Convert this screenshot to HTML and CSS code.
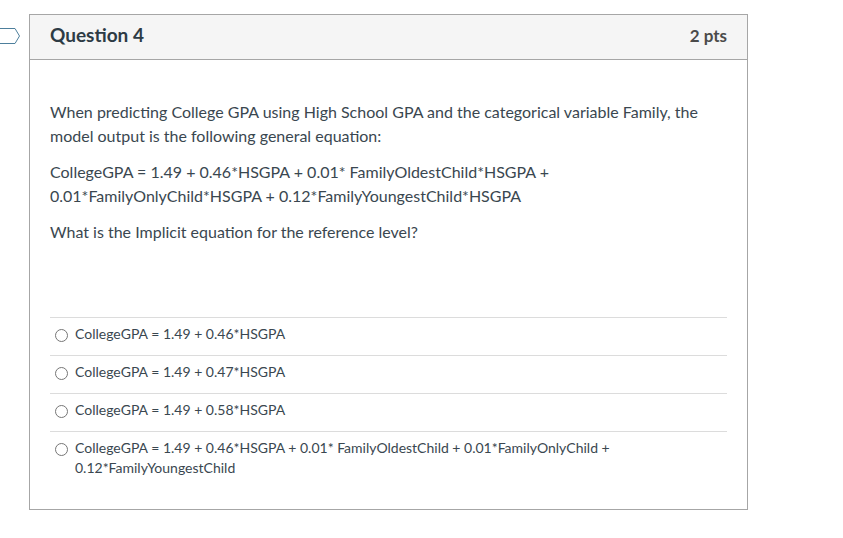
FILE: index.html
```html
<!DOCTYPE html>
<html lang="en">
<head>
<meta charset="utf-8">
<title>Question 4</title>
<link rel="stylesheet" href="styles.css">
</head>
<body>
<svg class="flag" width="21" height="16" viewBox="0 0 21 16" aria-hidden="true"><path d="M-2 .5H15L19.500 8 15 15.500H-2Z" fill="#fff" stroke="#4d7f9c" stroke-width="1"/></svg>
<section class="card">
  <header class="head">
    <h2 class="title">Question 4</h2>
    <span class="pts">2 pts</span>
  </header>
  <div class="body">
    <div class="prompt">
      <p>When predicting College GPA using High School GPA and the categorical variable Family, the model output is the following general equation:</p>
      <p>CollegeGPA = 1.49 + 0.46*HSGPA + 0.01* FamilyOldestChild*HSGPA + 0.01*FamilyOnlyChild*HSGPA + 0.12*FamilyYoungestChild*HSGPA</p>
      <p>What is the Implicit equation for the reference level?</p>
    </div>
    <ul class="answers">
      <li class="answer"><span class="radio"></span><span class="label">CollegeGPA = 1.49 + 0.46*HSGPA</span></li>
      <li class="answer"><span class="radio"></span><span class="label">CollegeGPA = 1.49 + 0.47*HSGPA</span></li>
      <li class="answer"><span class="radio"></span><span class="label">CollegeGPA = 1.49 + 0.58*HSGPA</span></li>
      <li class="answer"><span class="radio"></span><span class="label">CollegeGPA = 1.49 + 0.46*HSGPA + 0.01* FamilyOldestChild + 0.01*FamilyOnlyChild + 0.12*FamilyYoungestChild</span></li>
    </ul>
  </div>
</section>
</body>
</html>
```
FILE: styles.css
```css
* { box-sizing: border-box; }
html, body { margin: 0; padding: 0; background: #fff; }
body {
  width: 843px;
  height: 538px;
  overflow: hidden;
  padding: 14px 0 0 29px;
  font-family: Lato, "Liberation Sans", sans-serif;
  color: #3a4750;
}
.flag { position: absolute; left: 0; top: 28px; }
.card {
  width: 719px;
  height: 496px;
  border: 1px solid #a6a6a6;
}
.head {
  display: flex;
  justify-content: space-between;
  align-items: center;
  height: 45px;
  padding: 0 20px 4px 20px;
  background: #f5f5f5;
  border-bottom: 1px solid #a6a6a6;
}
.title { margin: 0; font-size: 19px; font-weight: 700; line-height: 40px; color: #2d3b45; }
.pts { font-size: 17px; font-weight: 700; color: #4a4a4a; }
.body { padding: 40px 20px 0 20px; }
.prompt { height: 217px; font-size: 16px; line-height: 24px; }
.prompt p { margin: 0 0 12px; }
.answers { margin: 0; padding: 0; list-style: none; font-size: 14px; line-height: 20px; }
.answer {
  display: flex;
  gap: 7px;
  padding: 6px 0 10px 5px;
  border-top: 1px solid #dcdcdc;
  min-height: 38px;
}
.radio {
  flex: none;
  width: 13px;
  height: 13px;
  margin-top: 5px;
  border: 1px solid #767676;
  border-radius: 50%;
  background: #fff;
}
.label { flex: 1; padding-right: 110px; }
```
